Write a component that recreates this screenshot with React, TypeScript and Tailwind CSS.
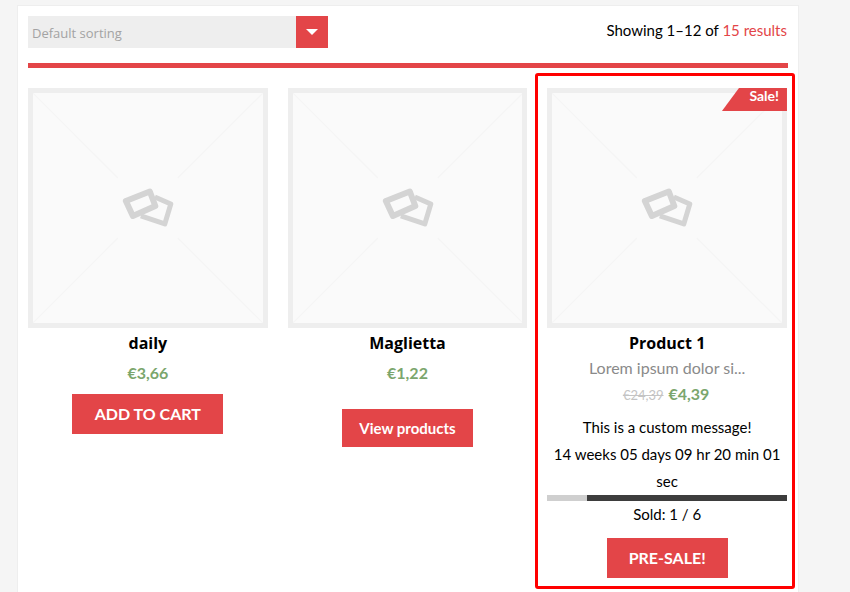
function Placeholder() {
  return (
    <div className="w-full h-[240px] border-[5px] border-[#eeeeee] bg-[#fafafa]">
      <svg viewBox="0 0 230 230" className="block w-full h-full">
        <path d="M0 0L85 85M230 0L145 85M0 230L85 145M230 230L145 145" stroke="#f5f5f5" strokeWidth="1.2" fill="none" />
        <g fill="none" stroke="#d4d4d4" strokeLinejoin="round" className="blur-[0.5px]">
          <path d="M122 104L138 111L132 131L108 123" strokeWidth="5" />
          <path d="M93 108L117 98.5L122.5 113L100 123Z" strokeWidth="6" />
        </g>
      </svg>
    </div>
  );
}

function Btn({ label, className }: { label: string; className: string }) {
  return <a className={`block mx-auto bg-[#e34548] text-white font-bold text-center ${className}`}>{label}</a>;
}

export default function App() {
  return (
    <div className="h-[592px] overflow-hidden bg-[#f5f5f5] pl-[17px] pt-[5px] font-['Lato',sans-serif] text-black">
      <div className="relative w-[782px] h-[600px] bg-white border border-[#eeeeee] px-[10px] pt-[10px]">
        <div className="flex justify-between">
          <div className="flex w-[300px] h-8">
            <div className="flex-1 bg-[#eeeeee] pl-1 text-[13px] leading-[34px] text-[#a3a3a3] font-['Open_Sans',sans-serif]">Default sorting</div>
            <div className="w-8 bg-[#e34548] flex items-center justify-center">
              <div className="w-0 h-0 border-x-[6px] border-x-transparent border-t-[6px] border-t-white" />
            </div>
          </div>
          <div className="text-[15px] leading-[28px] pr-px">
            Showing 1–12 of <span className="text-[#e34548]">15 results</span>
          </div>
        </div>
        <div className="h-[5px] bg-[#e34548] mt-[15px] mb-5" />

        <div className="grid grid-cols-[239.67px_239.67px_239.67px] gap-x-5">
          <div className="text-center">
            <Placeholder />
            <div className="font-['Open_Sans',sans-serif] font-bold text-base leading-[22px] mt-[4px]">daily</div>
            <div className="font-bold text-[#7ba66d] text-base leading-5 mt-[9px]">€3,66</div>
            <Btn label="ADD TO CART" className="w-[151px] h-10 mt-[11px] text-base leading-10" />
          </div>
          <div className="text-center">
            <Placeholder />
            <div className="font-['Open_Sans',sans-serif] font-bold text-base leading-[22px] mt-[4px]">Maglietta</div>
            <div className="font-bold text-[#7ba66d] text-base leading-5 mt-[9px]">€1,22</div>
            <Btn label="View products" className="w-[131px] h-[38px] mt-[26px] text-[15px] leading-[38px]" />
          </div>
          <div className="relative text-center">
            <Placeholder />
            <div className="absolute top-0 right-0 h-[23px] w-[65px] bg-[#e34548] [clip-path:polygon(17px_0,100%_0,100%_100%,0_100%)] text-white font-bold text-sm leading-[16px] text-right pr-2">Sale!</div>
            <div className="font-['Open_Sans',sans-serif] font-bold text-base leading-[22px] mt-[4px]">Product 1</div>
            <div className="text-[#8a8a8a] text-base leading-5 mt-[4px]">Lorem ipsum dolor si...</div>
            <div className="leading-5 mt-[4px] pr-[2px] flex justify-center items-baseline gap-[5px]">
              <span className="line-through text-[#c4c4c4] text-[13px]">€24,39</span>
              <span className="font-bold text-[#7ba66d] text-base">€4,39</span>
            </div>
            <div className="text-[15px] leading-[27px] mt-[8px]">This is a custom message!</div>
            <div className="text-[15px] leading-[27px]">14 weeks 05 days 09 hr 20 min 01 sec</div>
            <div className="flex h-[6px] bg-[#3d3d3d]">
              <div className="w-[40px] bg-[#cfcfcf]" />
            </div>
            <div className="text-[15px] leading-5 mt-[3px]">Sold: 1 / 6</div>
            <Btn label="PRE-SALE!" className="w-[121px] h-10 mt-[14px] text-base leading-10" />
          </div>
        </div>

        <div className="absolute left-[517px] top-[67px] w-[260px] h-[516px] border-[3px] border-[#ff0000] rounded-[3px] pointer-events-none" />
      </div>
    </div>
  );
}
